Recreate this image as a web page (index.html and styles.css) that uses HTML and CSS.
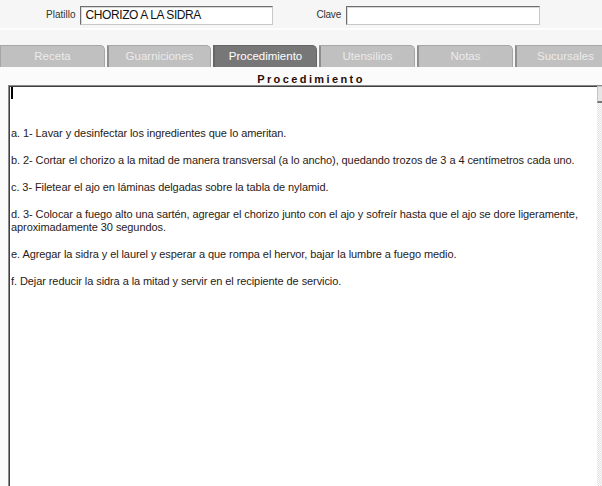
FILE: index.html
```html
<!DOCTYPE html>
<html lang="es">
<head>
    <meta charset="UTF-8">
    <title>Platillo | Procedimiento</title>
    <link rel="stylesheet" href="styles.css">
</head>
<body>
    <div class="header">
        <label class="field-label label-platillo" for="platillo">Platillo</label>
        <input type="text" id="platillo" class="field field-platillo" value="CHORIZO A LA SIDRA">
        <label class="field-label label-clave" for="clave">Clave</label>
        <input type="text" id="clave" class="field field-clave" value="">
    </div>
    <div class="tabs">
        <div class="tab tab-wide">Receta</div>
        <div class="tab tab-wide">Guarniciones</div>
        <div class="tab tab-wide active">Procedimiento</div>
        <div class="tab">Utensilios</div>
        <div class="tab">Notas</div>
        <div class="tab tab-last">Sucursales</div>
    </div>
    <div class="panel">
        <div class="panel-title">Procedimiento</div>
        <div class="editor">
            <div class="editor-text"><span class="caret"></span>


a. 1- Lavar y desinfectar los ingredientes que lo ameritan.

b. 2- Cortar el chorizo a la mitad de manera transversal (a lo ancho), quedando trozos de 3 a 4 centímetros cada uno.

c. 3- Filetear el ajo en láminas delgadas sobre la tabla de nylamid.

d. 3- Colocar a fuego alto una sartén, agregar el chorizo junto con el ajo y sofreír hasta que el ajo se dore ligeramente,
aproximadamente 30 segundos.

e. Agregar la sidra y el laurel y esperar a que rompa el hervor, bajar la lumbre a fuego medio.

f. Dejar reducir la sidra a la mitad y servir en el recipiente de servicio.</div>
            <div class="scrollbar">
                <div class="scroll-btn"></div>
                <div class="scroll-track"></div>
            </div>
        </div>
    </div>
</body>
</html>
```

FILE: styles.css
```css
html, body {
    margin: 0;
    padding: 0;
    height: 100%;
    overflow: hidden;
}
body {
    font-family: "Liberation Sans", Arial, sans-serif;
    background: #f6f6f6;
    display: flex;
    flex-direction: column;
}
.header {
    height: 30px;
    display: flex;
    align-items: center;
    border-bottom: 2px solid #fdfdfd;
    box-sizing: border-box;
}
.field-label {
    font-size: 10px;
    color: #333;
}
.label-platillo {
    margin-left: 46px;
    margin-right: 5px;
}
.label-clave {
    margin-left: 43px;
    margin-right: 5px;
    letter-spacing: -0.2px;
}
.field {
    height: 19px;
    box-sizing: border-box;
    border: 1px solid #c8c8c8;
    border-top-color: #6e6e6e;
    border-left-color: #6e6e6e;
    box-shadow: inset 1px 1px 0 #d8d8d8;
    background: #fff;
    font-family: "Liberation Sans", Arial, sans-serif;
    font-size: 12px;
    color: #111;
    padding: 0 4px;
    margin-top: 2px;
    outline: none;
}
.field-platillo {
    width: 193px;
    letter-spacing: -0.4px;
}
.field-clave {
    width: 194px;
}
.tabs {
    display: flex;
    gap: 2px;
    margin-top: 15px;
    height: 22px;
}
.tab {
    width: 96px;
    flex: none;
    box-sizing: border-box;
    background: #c0c0c0;
    color: #ebebeb;
    font-size: 11.5px;
    text-align: center;
    line-height: 21px;
    border: 1px solid #a6a6a6;
    border-left: 2px solid #8e8e8e;
    border-bottom: none;
    border-radius: 0 5px 0 0;
}
.tab-wide {
    width: 104px;
}
.tab:first-child {
    width: 105px;
    border-left: 1px solid #a6a6a6;
}
.tab-last {
    width: 100px;
}
.tab.active {
    background: #777;
    color: #fff;
    border-color: #666;
}
.panel {
    flex: 1;
    background: #fbfbfb;
    display: flex;
    flex-direction: column;
    min-height: 0;
}
.panel-title {
    text-align: center;
    font-size: 11px;
    font-weight: bold;
    letter-spacing: 2.4px;
    color: #2a0d08;
    margin: 6px 0 0 20px;
    height: 12px;
    line-height: 12px;
}
.editor {
    flex: 1;
    margin-left: 8px;
    width: 620px;
    background: #fff;
    border-top: 1px solid #8a8a8a;
    border-left: 1px solid #8a8a8a;
    box-shadow: inset 1px 1px 0 #404040;
    display: flex;
    min-height: 0;
}
.editor-text {
    width: 585px;
    flex: none;
    padding: 1px 0 0 2px;
    white-space: pre;
    font-size: 11px;
    line-height: 13.4px;
    letter-spacing: -0.08px;
    color: #2a1a18;
}
.caret {
    display: inline-block;
    width: 2px;
    height: 12px;
    background: #000;
    vertical-align: -2px;
}
.scrollbar {
    width: 17px;
    margin-left: 1px;
    display: flex;
    flex-direction: column;
}
.scroll-btn {
    height: 14px;
    background: #e6e6e6;
    border: 1px solid #c4c4c4;
    border-bottom: 2px solid #777;
}
.scroll-track {
    flex: 1;
    background: repeating-conic-gradient(#e4e4e4 0 25%, #fafafa 0 50%) 0 0 / 2px 2px;
}
```
